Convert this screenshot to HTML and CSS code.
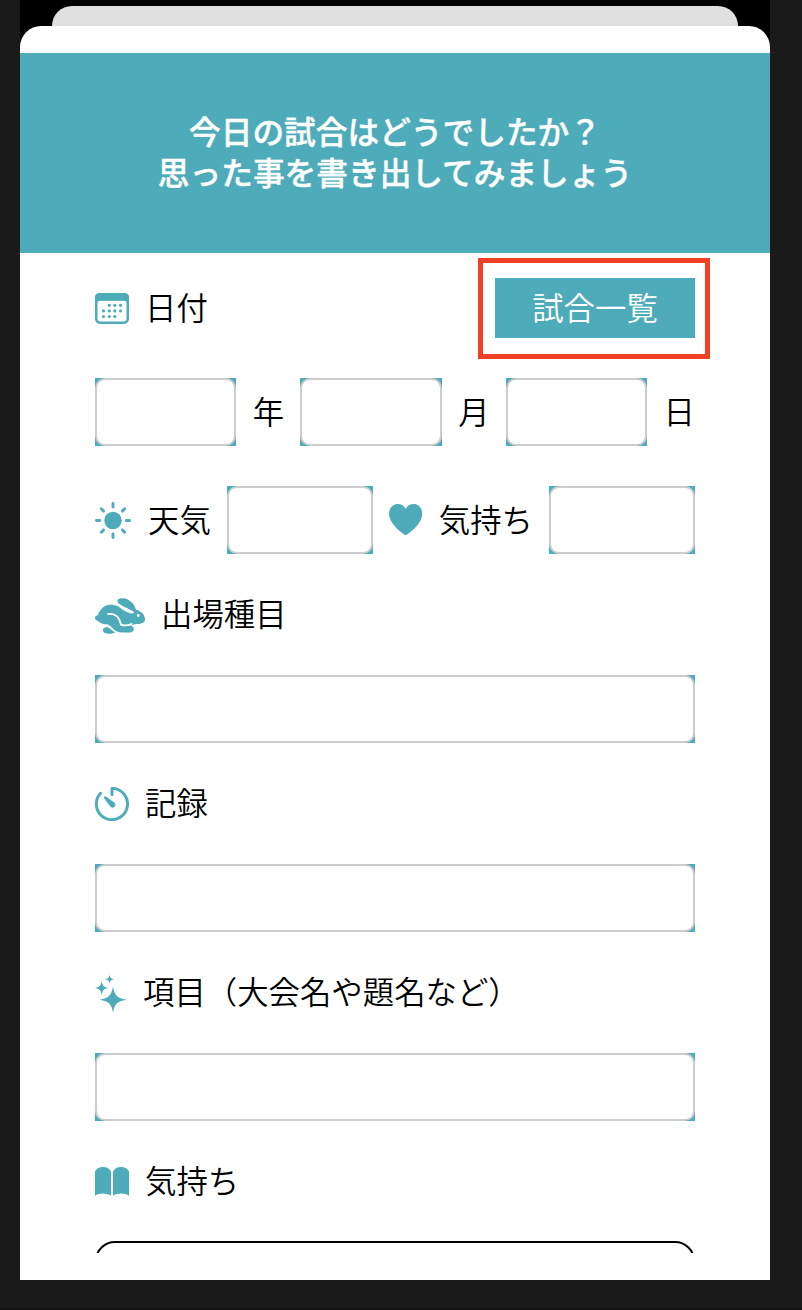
FILE: index.html
```html
<!DOCTYPE html>
<html lang="ja">
<head>
<meta charset="utf-8">
<title>試合の記録</title>
<link rel="stylesheet" href="styles.css">
</head>
<body>
<div class="phone">
  <div class="sheet-behind"></div>
  <main class="sheet">
    <header class="banner">
      <h1 class="banner-title">今日の試合はどうでしたか？<br>思った事を書き出してみましょう</h1>
    </header>
    <form class="form">
      <div class="row row-date">
        <svg class="icon" width="34" height="32" viewBox="0 0 34 32">
          <rect x="1.25" y="2.25" width="31.5" height="28.5" rx="4" fill="none" stroke="currentColor" stroke-width="2.5"/>
          <path d="M0 8.5V5.500Q0 1 4.500 1h25Q34 1 34 5.500v3z"/>
          <path d="M2 12V7h30v5Q32 8.700 29 8.700H5Q2 8.700 2 12z"/>
          <g>
            <circle cx="14.300" cy="13.300" r="1.600"/><circle cx="19.800" cy="13.300" r="1.600"/><circle cx="25.500" cy="13.300" r="1.600"/>
            <circle cx="8.500" cy="18.900" r="1.600"/><circle cx="14.300" cy="18.900" r="1.600"/><circle cx="19.800" cy="18.900" r="1.600"/><circle cx="25.500" cy="18.900" r="1.600"/>
            <circle cx="8.500" cy="24.500" r="1.600"/><circle cx="14.300" cy="24.500" r="1.600"/><circle cx="19.800" cy="24.500" r="1.600"/>
          </g>
        </svg>
        <span class="label">日付</span>
        <div class="highlight"><button class="list-button" type="button">試合一覧</button></div>
      </div>
      <div class="row row-ymd">
        <span class="field"><input class="input" aria-label="年"></span><span class="label">年</span>
        <span class="field"><input class="input" aria-label="月"></span><span class="label">月</span>
        <span class="field"><input class="input" aria-label="日"></span><span class="label">日</span>
      </div>
      <div class="row">
        <svg class="icon icon-sun" width="37" height="38" viewBox="0 0 37 38">
          <circle cx="18" cy="18.500" r="8.700"/>
          <path class="stroke" d="M18 1.500v3.600M18 31.900v3.600M1.500 18.500h3.300M31.200 18.500h3.300M6.300 6.800l2.200 2.300M29.700 6.800l-2.200 2.300M6.300 30.200l2.200-2.300M29.700 30.200l-2.200-2.300"/>
        </svg>
        <span class="label">天気</span>
        <span class="field"><input class="input" aria-label="天気"></span>
        <svg class="icon" width="34" height="34" viewBox="0 0 34 34">
          <path d="M16.800 32.300C15 31.300 10 28 6.500 24 2.500 19.500 0 15.500 0 11 0 5.200 3.800 1 8.600 1c3.600 0 6.500 1.600 8.100 4.700C18.300 2.600 21.200 1 24.800 1c4.800 0 8.400 4.200 8.400 10 0 4.500-2.400 8.500-6.300 13-3.600 4-8.400 7.300-10.100 8.300z"/>
        </svg>
        <span class="label">気持ち</span>
        <span class="field"><input class="input" aria-label="気持ち"></span>
      </div>
      <div class="row row-label">
        <svg class="icon icon-rabbit" width="50" height="37" viewBox="0 0 50 37">
          <path d="M0 20C0 18.500 1.200 17.300 2.800 17.200 4 13.500 6.500 10.500 9 8.700 13 6 18.500 6.500 23 8.300 27 11 31 14.500 36.500 15.500 39 15.800 39.500 14.200 38 13.200 34.500 11.500 29 9 24.500 6 21.500 4 22 1.500 25 .600c4.500-1.300 9 .800 12 4 2 2.300 3.400 5 4 7.200 5.500 1.200 9 5.200 9 9.700 0 3-3.500 4.500-8 4.500-2.500 0-4 1-6.500 1.600C30 28 25 27 21 26.200 17 25.800 14 26.500 10 26.300 6.500 26 4 24.500 2.800 22.800 1.200 22.500 0 21.500 0 20z"/>
          <path d="M13 25.500c4-1 8.500-.500 11.500 1.500 3 1.200 7 .800 9.500.200 3 .100 4.800 1.700 4.800 3.800 0 2.300-1.500 3.500-4.300 3.500-6 0-11 .400-14.500-2C17.500 30.300 16 28 13 26.800z"/>
          <path d="M8 32c0-2.500 3-3.300 5.500-2.300 2.500 1 3.500 3.300 6.800 4.600-3 2.200-12.300 2.500-12.300-2.300z"/>
          <circle class="cut" cx="43.300" cy="17.500" r="1.400"/>
          <path class="cut-line" d="M13.300 16c5.200-.6 8.700 1.800 10.700 5 1.100 1.900 1.200 4.200 2.500 6 3.500.7 7 .2 10-.900"/>
        </svg>
        <span class="label">出場種目</span>
      </div>
      <div class="row"><span class="field"><input class="input" aria-label="出場種目"></span></div>
      <div class="row row-label">
        <svg class="icon" width="34" height="34" viewBox="0 0 34 34">
          <path class="stroke" d="M17 7.800V1.400A15.600 15.600 0 1 1 5.600 6.300"/>
          <path d="M9 9.900q.6-1.100 1.900-.4L19 15.300a2.900 2.900 0 1 1-3.800 4.300L9.300 11.500Q8.600 10.700 9 9.900z"/>
        </svg>
        <span class="label">記録</span>
      </div>
      <div class="row"><span class="field"><input class="input" aria-label="記録"></span></div>
      <div class="row row-label">
        <svg class="icon icon-sparkle" width="32" height="38" viewBox="0 0 32 38">
          <path d="M18 11.500c1.500 8.700 4 11.700 13.300 13.200C22 26.200 19.500 29 18 37.800 16.500 29 14 26.200 4.600 24.700 14 23.200 16.500 20.200 18 11.500z"/>
          <path d="M6.700 6.300c.9 4.500 2.100 5.800 6.500 6.700-4.400.9-5.600 2.200-6.500 6.700C5.800 15.200 4.600 13.900 0 13c4.600-.9 5.800-2.200 6.700-6.700z"/>
          <path d="M14.600 0c.6 2.800 1.500 3.600 4.300 4.200-2.800.6-3.700 1.400-4.300 4.200-.6-2.800-1.500-3.600-4.300-4.200 2.800-.6 3.700-1.400 4.300-4.200z"/>
        </svg>
        <span class="label">項目（大会名や題名など）</span>
      </div>
      <div class="row"><span class="field"><input class="input" aria-label="項目"></span></div>
      <div class="row row-label row-memo">
        <svg class="icon" width="34" height="30" viewBox="0 0 34 30">
          <path d="M0 5.500C1.500 2.300 4.500 1 8 1s6.500 1.300 8 4.500v24.300c-4-3.200-12-3.200-16 0z"/>
          <path d="M18 5.500C19.500 2.300 22.500 1 26 1s6.500 1.300 8 4.500v24.300c-4-3.200-12-3.200-16 0z"/>
        </svg>
        <span class="label">気持ち</span>
      </div>
      <div class="memo-clip"><textarea class="memo" aria-label="気持ちのメモ"></textarea></div>
    </form>
  </main>
</div>
</body>
</html>
```
FILE: styles.css
```css
* { box-sizing: border-box; }

body {
  margin: 0;
  height: 1310px;
  padding: 0 32px 30px 20px;
  background: #1a1a1a;
  border-bottom: 2px solid #141112;
  font-family: "Noto Sans CJK JP", sans-serif;
  color: #000;
  overflow: hidden;
}

.phone {
  height: 1280px;
  padding-top: 6px;
  background: #000;
}

.sheet-behind {
  height: 20px;
  margin: 0 32px;
  background: #e0e0e0;
  border-radius: 20px 20px 0 0;
}

.sheet {
  height: 1254px;
  padding-top: 27px;
  background: #fff;
  border-radius: 21px 21px 0 0;
}

.banner {
  height: 200px;
  padding-bottom: 4px;
  display: flex;
  align-items: center;
  justify-content: center;
  background: #4eabb9;
  color: #fff;
  text-align: center;
}

.banner-title {
  margin: 0;
  font-size: 31.700px;
  font-weight: 500;
  line-height: 41px;
  -webkit-text-stroke: 0.4px #fff;
}

.form {
  display: flex;
  flex-direction: column;
  gap: 40px;
  padding: 25px 75px 0;
}

.row {
  display: flex;
  align-items: center;
  gap: 16px;
  height: 68px;
}

.row-date { height: 60px; }
.row-ymd { gap: 16.300px; }
.row-label { height: 41px; }
.row-memo { height: 40px; }

.icon {
  flex: none;
  display: block;
  color: #4eabb9;
  fill: currentColor;
}

.icon-sun { margin-top: 2px; }
.icon-rabbit { margin-top: 3px; }
.icon-sparkle { margin-top: 2px; }

.stroke {
  fill: none;
  stroke: currentColor;
  stroke-width: 2.900;
  stroke-linecap: round;
  stroke-linejoin: round;
}

.cut { fill: #fff; }

.cut-line {
  fill: none;
  stroke: #fff;
  stroke-width: 1.900;
  stroke-linecap: round;
}

.label {
  flex: none;
  padding-bottom: 2px;
  font-size: 31.400px;
  font-weight: 350;
  line-height: 40px;
  white-space: nowrap;
}

.row-label .label { padding-bottom: 4px; }
.row-memo .label { padding-bottom: 3px; }

.highlight {
  margin: 0 -15px 0 auto;
  padding: 15px 10px 16px 12px;
  border: 5px solid #ee4126;
}

.list-button {
  display: block;
  width: 200px;
  height: 60px;
  padding: 0 0 2px;
  border: 0;
  background: #4eabb9;
  color: #fff;
  font: 350 31.400px/56px "Noto Sans CJK JP", sans-serif;
}

.field {
  flex: 1 1 0;
  min-width: 0;
  height: 68px;
  background: #4eabb9;
}

.input {
  display: block;
  width: 100%;
  height: 100%;
  padding: 0 12px;
  border: 2px solid #ccc;
  border-radius: 10px;
  background: #fff;
  font: inherit;
  outline: 0;
}

.memo-clip {
  height: 12px;
  overflow: hidden;
}

.memo {
  display: block;
  width: 100%;
  height: 200px;
  border: 2px solid #000;
  border-radius: 20px;
  background: #fff;
  resize: none;
}
```
